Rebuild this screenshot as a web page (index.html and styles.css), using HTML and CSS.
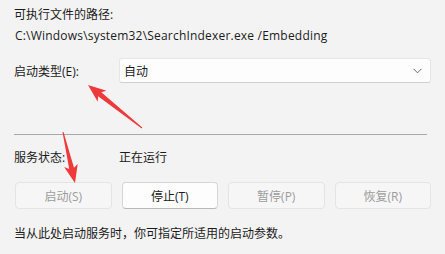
FILE: index.html
```html
<!DOCTYPE html>
<html lang="zh-CN">
<head>
<meta charset="utf-8">
<link rel="stylesheet" href="styles.css">
</head>
<body>
<div class="panel">
  <div class="line first">可执行文件的路径:</div>
  <div class="line path">C:\Windows\system32\SearchIndexer.exe /Embedding</div>
  <div class="row startup">
    <div class="label">启动类型(E):</div>
    <div class="select">
      <span>自动</span>
      <svg class="chev" width="9" height="6" viewBox="0 0 9 6"><path d="M0.5 0.8 L4.5 4.8 L8.5 0.8" fill="none" stroke="#5a5a5a" stroke-width="0.9"/></svg>
    </div>
  </div>
  <div class="sep"></div>
  <div class="row status">
    <div class="label">服务状态:</div>
    <div class="value">正在运行</div>
  </div>
  <div class="buttons">
    <div class="btn disabled">启动(S)</div>
    <div class="btn active">停止(T)</div>
    <div class="btn disabled">暂停(P)</div>
    <div class="btn disabled">恢复(R)</div>
  </div>
  <div class="line note">当从此处启动服务时，你可指定所适用的启动参数。</div>
</div>
<svg class="arrows" width="445" height="254" viewBox="0 0 445 254">
  <polygon fill="#ee3a3a" points="88,85 106.5,90.7 101.3,92.3 142.3,127.6 141.7,128.4 98.1,96.3 97.7,101.7"/>
  <polygon fill="#ee3a3a" points="75,183 77.7,163.9 74.0,167.8 63.5,131.9 62.5,132.1 69.2,169.0 64.1,167.1"/>
</svg>
</body>
</html>
```
FILE: styles.css
```css
html, body {
  margin: 0;
  padding: 0;
  background: #f3f3f3;
}
body {
  width: 445px;
  height: 254px;
  overflow: hidden;
  position: relative;
  font-family: "Segoe UI", "Open Sans", "Noto Sans CJK SC", sans-serif;
  font-size: 12px;
  color: #1b1b1b;
}
.panel {
  padding: 7px 14px 0 14px;
}
.line {
  height: 16px;
  line-height: 16px;
  white-space: nowrap;
}
.path {
  margin-top: 5px;
  padding-left: 1px;
  letter-spacing: 0.2px;
}
.row {
  display: flex;
  align-items: center;
}
.label {
  width: 105px;
  flex: none;
}
.startup {
  margin-top: 14px;
  height: 25px;
}
.select {
  flex: 1;
  box-sizing: border-box;
  height: 25px;
  background: #fdfdfd;
  border: 1px solid #e6e6e6;
  border-bottom-color: #cfcfcf;
  border-radius: 3px;
  display: flex;
  align-items: center;
  justify-content: space-between;
  padding: 0 8px 0 4px;
}
.chev {
  display: block;
}
.sep {
  margin-top: 51px;
  margin-right: 4px;
  height: 1px;
  background: #a8a8a8;
}
.status {
  margin-top: 15px;
  height: 16px;
  line-height: 16px;
}
.buttons {
  margin-top: 16px;
  display: grid;
  grid-template-columns: repeat(4, 1fr);
  column-gap: 10px;
  padding-left: 1px;
}
.btn {
  height: 27px;
  box-sizing: border-box;
  border-radius: 4px;
  display: flex;
  align-items: center;
  justify-content: center;
}
.btn.disabled {
  background: #f6f6f6;
  border: 1px solid #e4e4e4;
  color: #9d9d9d;
}
.btn.active {
  background: #fdfdfd;
  border: 1px solid #d6d6d6;
  border-bottom-color: #b8b8b8;
  color: #1b1b1b;
}
.note {
  margin-top: 17px;
}
.arrows {
  position: absolute;
  left: 0;
  top: 0;
  pointer-events: none;
}
```
